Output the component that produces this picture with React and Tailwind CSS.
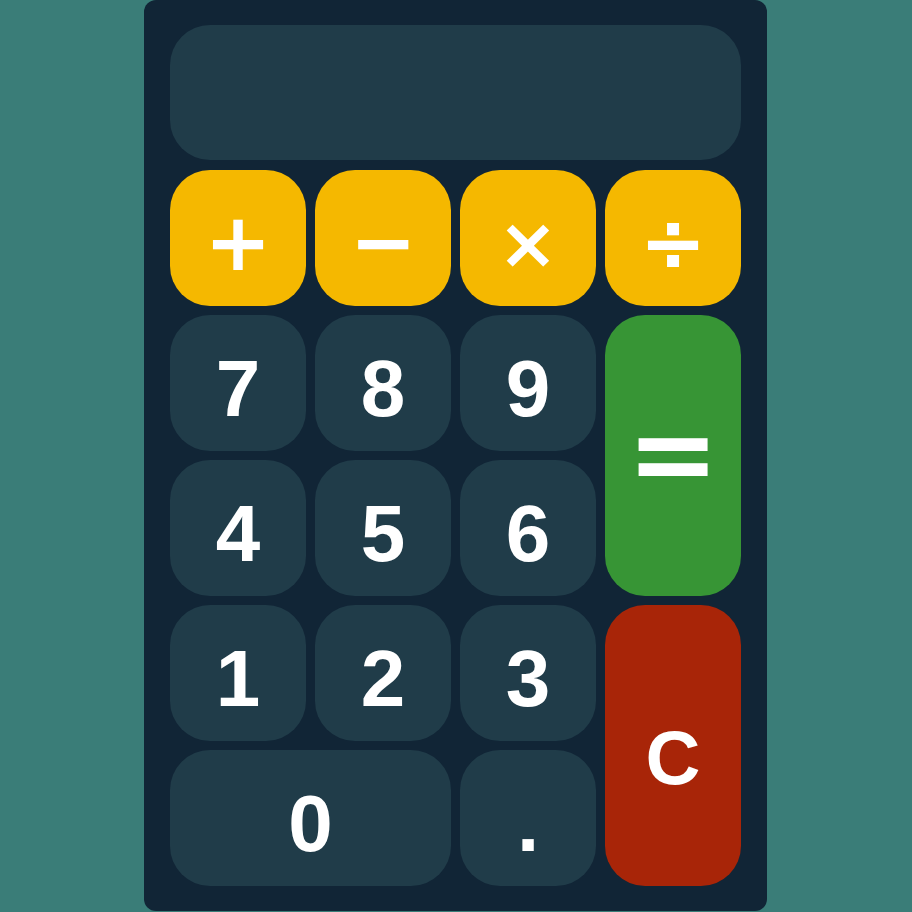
import React, { useState } from "react";

const keyBase =
  "flex items-center justify-center rounded-[40px] text-white font-bold leading-none select-none";
const numKey = `${keyBase} bg-[#203c49] text-[80px] pt-3`;
const opFont = { fontFamily: '"DejaVu Sans", sans-serif' };

function App() {
  const [display, setDisplay] = useState("");

  const press = (k) => {
    if (k === "C") return setDisplay("");
    if (k === "=") {
      try {
        const expr = display.replace(/×/g, "*").replace(/÷/g, "/").replace(/−/g, "-");
        // eslint-disable-next-line no-new-func
        setDisplay(String(Function(`return (${expr})`)()));
      } catch (e) {
        setDisplay("Error");
      }
      return;
    }
    setDisplay((d) => d + k);
  };

  const ops = [
    { k: "+", cls: "text-[80px] pt-[9px]" },
    { k: "−", cls: "text-[80px] pt-[9px]" },
    { k: "×", cls: "text-[72px] pt-[10px]" },
    { k: "÷", cls: "text-[80px] pt-[9px]" },
  ];

  return (
    <div
      className="min-h-screen w-full flex items-start justify-center pr-px bg-[#3a7d78]"
      style={{ fontFamily: '"Liberation Sans", Arial, sans-serif' }}
    >
      <div className="w-[623px] bg-[#112536] rounded-[12px] pt-[25px] pb-[25px] px-[26px]">
        <div className="h-[135px] mb-[10px] rounded-[40px] bg-[#203c49] flex items-center justify-end px-8 text-white text-6xl font-bold overflow-hidden">
          {display}
        </div>

        <div className="grid grid-cols-4 grid-rows-[repeat(5,136px)] gap-[9px]">
          {ops.map((op) => (
            <button
              key={op.k}
              onClick={() => press(op.k)}
              style={opFont}
              className={`${keyBase} bg-[#f5b800] ${op.cls}`}
            >
              {op.k}
            </button>
          ))}

          <button onClick={() => press("7")} className={numKey}>7</button>
          <button onClick={() => press("8")} className={numKey}>8</button>
          <button onClick={() => press("9")} className={numKey}>9</button>
          <button
            onClick={() => press("=")}
            style={opFont}
            className={`${keyBase} row-span-2 bg-[#379535] text-[110px] pb-[4px]`}
          >
            =
          </button>

          <button onClick={() => press("4")} className={numKey}>4</button>
          <button onClick={() => press("5")} className={numKey}>5</button>
          <button onClick={() => press("6")} className={numKey}>6</button>

          <button onClick={() => press("1")} className={numKey}>1</button>
          <button onClick={() => press("2")} className={numKey}>2</button>
          <button onClick={() => press("3")} className={numKey}>3</button>
          <button
            onClick={() => press("C")}
            className={`${keyBase} row-span-2 bg-[#a82508] text-[76px] pt-[24px]`}
          >
            C
          </button>

          <button onClick={() => press("0")} className={`${numKey} col-span-2`}>
            0
          </button>
          <button onClick={() => press(".")} className={numKey}>.</button>
        </div>
      </div>
    </div>
  );
}

export default App;
